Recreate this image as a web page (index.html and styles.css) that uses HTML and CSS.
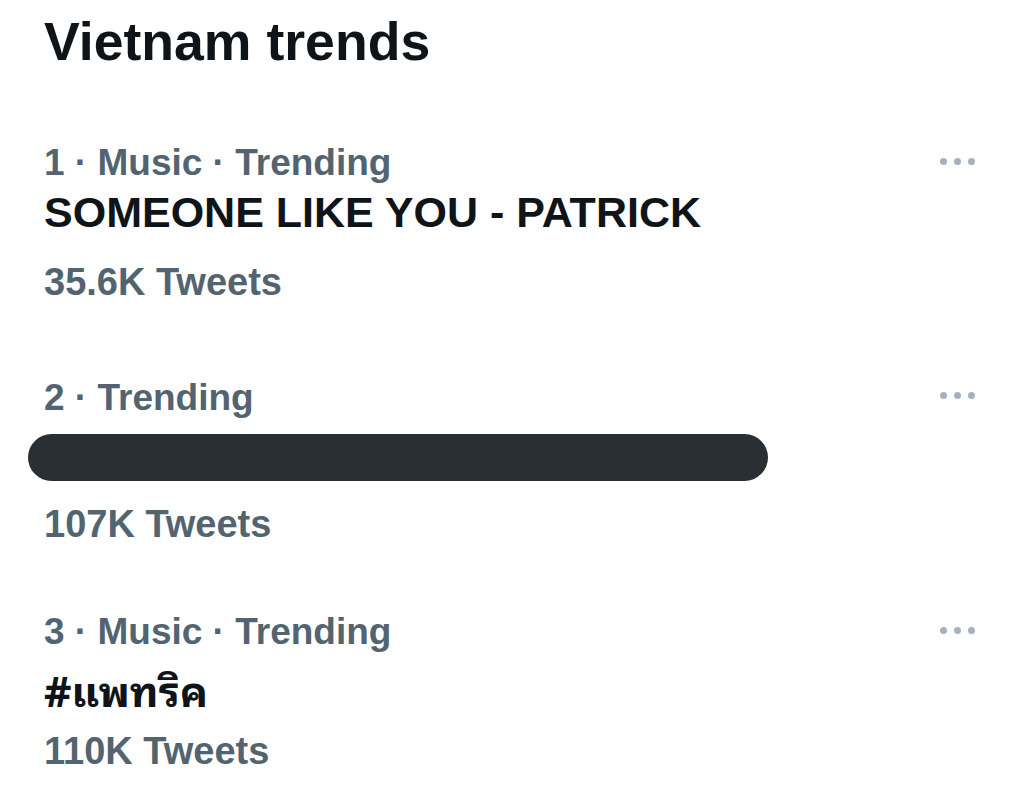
FILE: index.html
```html
<!DOCTYPE html>
<html lang="en">
<head>
<meta charset="utf-8">
<title>Vietnam trends</title>
<link rel="stylesheet" href="styles.css">
</head>
<body>
<main class="page">
  <h1 class="heading">Vietnam trends</h1>
  <ul class="trends">
    <li class="trend">
      <div class="trend-body">
        <div class="meta">1 · Music · Trending</div>
        <div class="name">SOMEONE LIKE YOU - PATRICK</div>
        <div class="count">35.6K Tweets</div>
      </div>
      <div class="more" aria-label="More"><span class="dot"></span><span class="dot"></span><span class="dot"></span></div>
    </li>
    <li class="trend">
      <div class="trend-body">
        <div class="meta">2 · Trending</div>
        <div class="redacted"></div>
        <div class="count">107K Tweets</div>
      </div>
      <div class="more" aria-label="More"><span class="dot"></span><span class="dot"></span><span class="dot"></span></div>
    </li>
    <li class="trend">
      <div class="trend-body">
        <div class="meta">3 · Music · Trending</div>
        <div class="name name-thai" lang="th">#แพทริค</div>
        <div class="count">110K Tweets</div>
      </div>
      <div class="more" aria-label="More"><span class="dot"></span><span class="dot"></span><span class="dot"></span></div>
    </li>
  </ul>
</main>
</body>
</html>
```

FILE: styles.css
```css
* { box-sizing: border-box; }

html, body {
  margin: 0;
  padding: 0;
  background: #ffffff;
}

body {
  font-family: "Liberation Sans", Arial, sans-serif;
  color: #0f1419;
}

.page {
  padding: 11px 49px 0 44px;
}

.heading {
  margin: 0 0 70px 0;
  font-size: 53.6px;
  line-height: 60px;
  font-weight: 700;
  color: #0f1419;
}

.trends {
  list-style: none;
  margin: 0;
  padding: 0;
}

.trend {
  height: 234.5px;
  display: flex;
  justify-content: space-between;
  align-items: flex-start;
}

.trend:last-child {
  height: auto;
}

.trend-body {
  display: flex;
  flex-direction: column;
}

.meta {
  font-size: 37px;
  line-height: 44px;
  font-weight: 700;
  color: #536471;
}

.name {
  font-size: 43px;
  line-height: 54px;
  font-weight: 700;
  color: #0f1419;
}

.name-thai {
  font-family: "Noto Sans Thai Looped", "Noto Sans Thai", "Noto Sans", "DejaVu Sans", sans-serif;
  font-size: 42px;
  line-height: 40px;
  padding-top: 14px;
}

.count {
  margin-top: 21px;
  font-size: 38px;
  line-height: 44px;
  font-weight: 700;
  color: #536471;
}

.redacted {
  margin: 14px 0 0 -16px;
  width: 740px;
  height: 47px;
  border-radius: 23.5px;
  background: #2a2f33;
}

.more {
  display: flex;
  gap: 7px;
  margin-top: 16.5px;
}

.dot {
  width: 7px;
  height: 7px;
  border-radius: 50%;
  background: #a5b2be;
}
```
